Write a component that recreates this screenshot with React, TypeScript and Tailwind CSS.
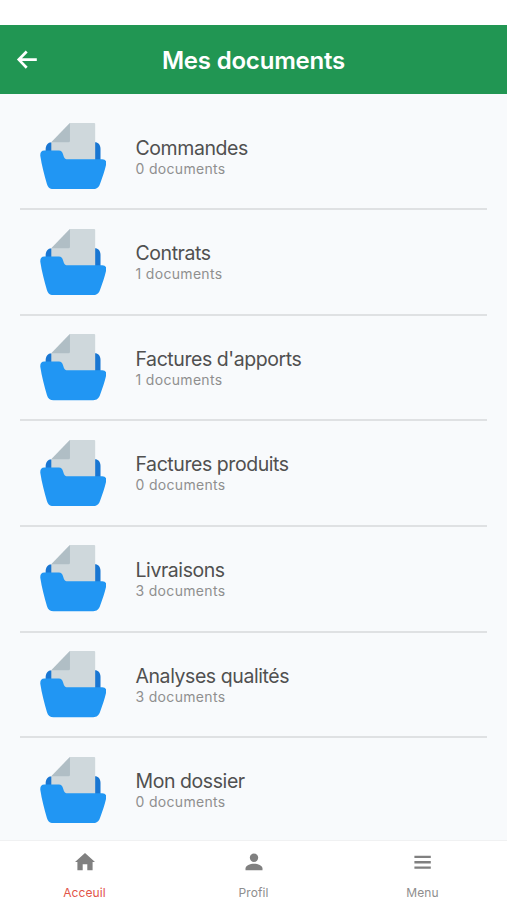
const folders = [
  { name: "Commandes", count: 0 },
  { name: "Contrats", count: 1 },
  { name: "Factures d'apports", count: 1 },
  { name: "Factures produits", count: 0 },
  { name: "Livraisons", count: 3 },
  { name: "Analyses qualités", count: 3 },
  { name: "Mon dossier", count: 0 },
];

const FolderIcon = () => (
  <svg className="size-[66.5px] shrink-0" viewBox="0 0 200 200">
    <path
      d="M17 90V78C17 68 24 58 34 58H165C175 58 182 66 182 78V120H17Z"
      fill="#1976d2"
    />
    <path d="M90 0H163Q166 0 166 3V120H34V58Z" fill="#cfd8dc" />
    <path d="M90 0V54Q90 58 86 58H34Z" fill="#b0bec5" />
    <path
      d="M13 83H57C64 83 67 87 69 93L72 102C74 107 77 109 83 109H187C196 109 201 115 199 124C196 141 188 163 181 182C177 194 171 199 160 199H41C30 199 24 194 21 184C13 156 5 126 1 99C0 89 4 83 13 83Z"
      fill="#2196f3"
    />
  </svg>
);

const HomeIcon = () => (
  <svg className="h-6 w-6" viewBox="0 0 24 24" fill="#808080">
    <path d="M9.7 20.2v-6h4.6v6h5.3v-8.2H22L12 3 2 12h2.4v8.2z" />
  </svg>
);

const ProfileIcon = () => (
  <svg className="h-6 w-6" viewBox="0 0 24 24" fill="#808080">
    <circle cx="12" cy="7.7" r="4.2" />
    <path d="M3.5 20.2v-1.7c0-3 4.6-4.7 8.5-4.7s8.5 1.7 8.5 4.7v1.7z" />
  </svg>
);

const MenuIcon = () => (
  <svg className="h-6 w-6" viewBox="0 0 24 24" fill="#808080">
    <path d="M3.4 5.8h16.4v2.3H3.4zM3.4 11.1h16.4v2.3H3.4zM3.4 16.4h16.4v2.3H3.4z" />
  </svg>
);

const tabs = [
  { label: "Acceuil", icon: <HomeIcon />, color: "text-[#e25549]" },
  { label: "Profil", icon: <ProfileIcon />, color: "text-[#8e8e8e]" },
  { label: "Menu", icon: <MenuIcon />, color: "text-[#8e8e8e]" },
];

export default function App() {
  return (
    <main className="flex h-[900px] w-full flex-col overflow-hidden bg-[#f8fafc] font-['Inter',sans-serif]">
      <header className="shrink-0 bg-white pt-[25px]">
        <div className="grid h-[69px] grid-cols-[60px_1fr_60px] items-center bg-[#219653]">
          <button className="pl-4 text-white" aria-label="Retour">
            <svg
              className="h-[22px] w-[22px]"
              viewBox="0 0 22 22"
              fill="none"
              stroke="currentColor"
              strokeWidth="2.7"
            >
              <path d="M20.8 10.6H3M10.7 2.5L2.8 10.6l7.9 8.1" />
            </svg>
          </button>
          <h1 className="pt-0.5 text-center text-2xl font-semibold tracking-[-0.2px] text-white">
            Mes documents
          </h1>
        </div>
      </header>

      <ul className="min-h-0 flex-1 overflow-hidden px-5 pt-[10.3px]">
        {folders.map((folder) => (
          <li
            key={folder.name}
            className="flex h-[105.65px] flex-col justify-between"
          >
            <div className="flex flex-1 items-center pl-[19.5px]">
              <FolderIcon />
              <div className="ml-[29.5px] pt-[0.8px]">
                <p className="text-[19.5px] leading-6 tracking-[-0.43px] text-[#505050]">
                  {folder.name}
                </p>
                <p className="text-[14px] leading-[18px] tracking-[0.32px] text-[#8f8f8f]">
                  {folder.count} documents
                </p>
              </div>
            </div>
            <div className="border-t-2 border-[#dfe1e3]" />
          </li>
        ))}
      </ul>

      <nav className="grid h-[60px] shrink-0 grid-cols-3 border-t border-[#f0f1f2] bg-white">
        {tabs.map((tab) => (
          <a key={tab.label} className="flex flex-col items-center pt-[9.4px]">
            {tab.icon}
            <span
              className={`mt-[10.6px] text-[12px] leading-4 tracking-[0.1px] ${tab.color}`}
            >
              {tab.label}
            </span>
          </a>
        ))}
      </nav>
    </main>
  );
}
